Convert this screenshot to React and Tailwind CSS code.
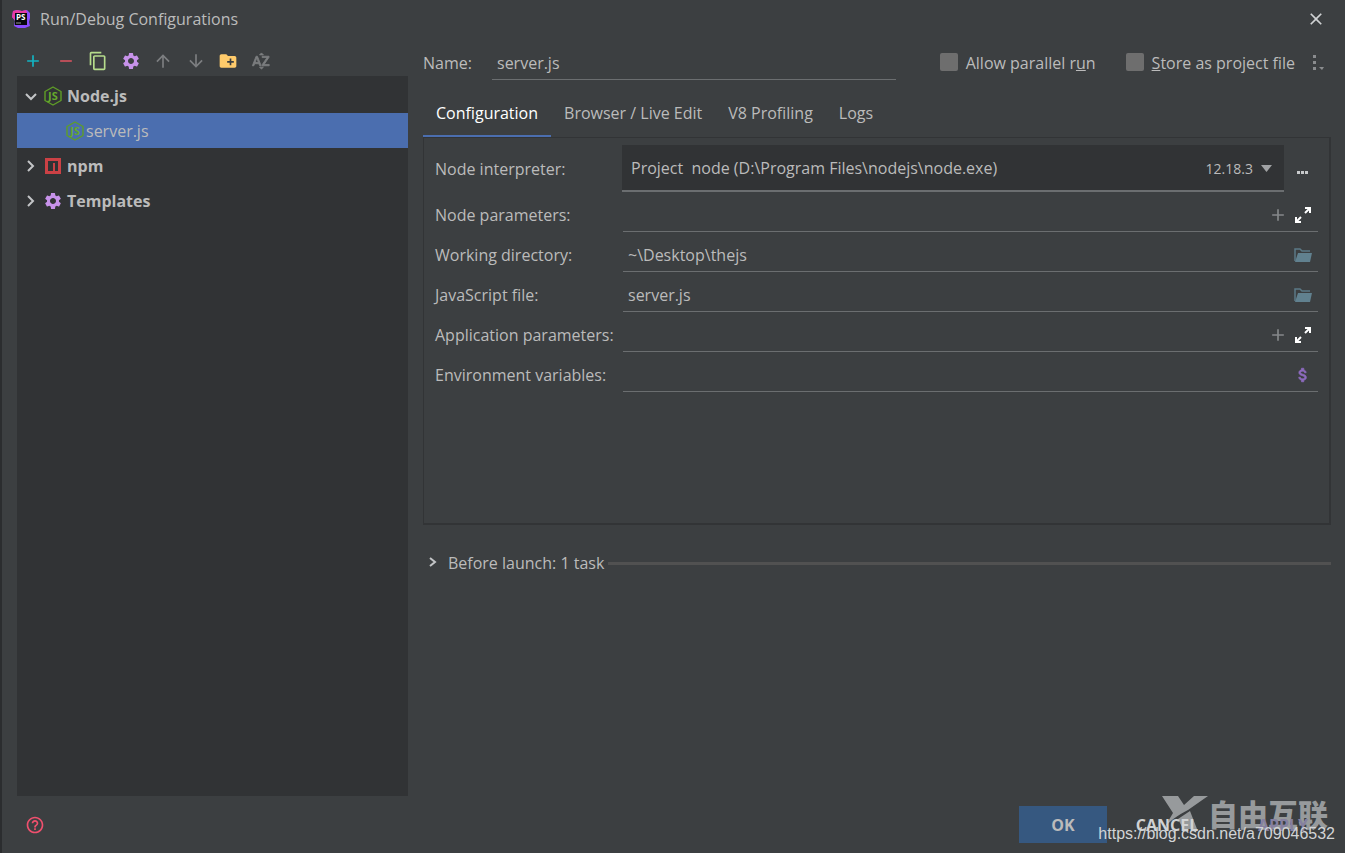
import { useState } from "react";
import {
  MdAdd,
  MdArrowDownward,
  MdArrowUpward,
  MdAttachMoney,
  MdClose,
  MdContentCopy,
  MdCreateNewFolder,
  MdHelpOutline,
  MdRemove,
  MdSettings,
  MdSortByAlpha,
} from "react-icons/md";

const TOOLS = [
  { label: "Add", icon: MdAdd, color: "text-[#12b5c4]" },
  { label: "Remove", icon: MdRemove, color: "text-[#d0525d]" },
  { label: "Copy", icon: MdContentCopy, color: "text-[#b5dc8c]" },
  { label: "Edit templates", icon: MdSettings, color: "text-[#c792ea]" },
  { label: "Move up", icon: MdArrowUpward, color: "text-[#7c7e80]" },
  { label: "Move down", icon: MdArrowDownward, color: "text-[#7c7e80]" },
  { label: "New folder", icon: MdCreateNewFolder, color: "text-[#ffcb6b]" },
  { label: "Sort", icon: MdSortByAlpha, color: "text-[#7c7e80] [&_path:last-child]:stroke-1" },
];

const TABS = ["Configuration", "Browser / Live Edit", "V8 Profiling", "Logs"];

const FIELDS = [
  { id: "node-params", label: "Node parameters:", value: "", kind: "expand" },
  { id: "work-dir", label: "Working directory:", value: "~\\Desktop\\thejs", kind: "folder" },
  { id: "js-file", label: "JavaScript file:", value: "server.js", kind: "folder" },
  { id: "app-params", label: "Application parameters:", value: "", kind: "expand" },
  { id: "env-vars", label: "Environment variables:", value: "", kind: "env" },
];

function AppLogo() {
  return (
    <svg width="20" height="20" viewBox="0 0 20 20" aria-hidden="true">
      <path d="M2 2l4-1 5 1 5-1 3 3v5l-1 4 1 4-5 2H7l-4-2 1-5-3-4z" fill="#8a4dff" />
      <path d="M2 2l4-1 5 1 4-1 1 3-8 1-4 6-3-3z" fill="#e83aa5" />
      <path d="M4 4h12v12H4z" fill="#08080c" />
      <text x="5" y="11" fontSize="8" fontWeight="700" fill="#fff" fontFamily="Open Sans, sans-serif">PS</text>
      <path d="M5 14h5" stroke="#999" strokeWidth="1" />
    </svg>
  );
}

function NodeIcon() {
  return (
    <svg width="20" height="20" viewBox="0 0 20 20" className="shrink-0" aria-hidden="true">
      <path d="M10 1l8 4.500v9L10 19l-8-4.500v-9z" fill="none" stroke="#5f9e27" strokeWidth="1.400" strokeLinejoin="round" />
      <text x="5" y="14" fontSize="11" fontWeight="700" fill="#65a82b" fontFamily="Open Sans, sans-serif">JS</text>
    </svg>
  );
}

function NpmIcon() {
  return (
    <svg width="18" height="18" viewBox="0 0 18 18" className="shrink-0" aria-hidden="true">
      <path d="M1 1h16v16H1z M4 4v10h5V6h2v8h3V4z" fill="#cb4145" fillRule="evenodd" />
    </svg>
  );
}

function Chevron({ open }) {
  return (
    <svg width="12" height="12" viewBox="0 0 12 12" className="shrink-0" aria-hidden="true">
      <path d={open ? "M1 4l5 5 5-5" : "M3 1l5 5-5 5"} fill="none" stroke="#c3c5c7" strokeWidth="2" />
    </svg>
  );
}

function SmallChevron() {
  return (
    <svg width="12" height="12" viewBox="0 0 12 12" className="mb-0.5 shrink-0" aria-hidden="true">
      <path d="M3 2l5 4-5 4" fill="none" stroke="#c3c5c7" strokeWidth="2" />
    </svg>
  );
}

function ExpandIcon() {
  return (
    <svg width="18" height="18" viewBox="0 0 18 18" aria-hidden="true">
      <path d="M11 2h5v5M15 3l-4 4M7 16H2v-5M3 15l4-4" fill="none" stroke="#fff" strokeWidth="2" />
    </svg>
  );
}

function FolderIcon() {
  return (
    <svg width="18" height="16" viewBox="0 0 18 16" aria-hidden="true">
      <path d="M1 14V2h5l2 2h8" fill="none" stroke="#5b7a87" strokeWidth="1.500" />
      <path d="M4 6h14l-2 9H1z" fill="#61818f" />
    </svg>
  );
}

function TreeItem({ label, icon, open }) {
  return (
    <button className="flex h-[35px] w-full items-center pl-2 text-left font-bold">
      <Chevron open={open} />
      <span className="ml-1.5 mr-1 flex w-5 justify-center">{icon}</span>
      {label}
    </button>
  );
}

function FieldRow({ field }) {
  const [value, setValue] = useState(field.value);

  return (
    <div className="flex h-10 items-stretch">
      <label htmlFor={field.id} className="flex w-[188px] shrink-0 items-center pt-1.5">
        {field.label}
      </label>
      <div className="flex min-w-0 flex-1 items-center border-b border-[#6b6e70] pr-1.5 pt-1.5">
        <input
          id={field.id}
          value={value}
          onChange={(e) => setValue(e.target.value)}
          className="min-w-0 flex-1 bg-transparent px-[5px] outline-none"
        />
        {field.kind === "expand" && (
          <>
            <button aria-label="Insert macro" className="mr-1.5 text-[#85888a]">
              <MdAdd size={20} />
            </button>
            <button aria-label="Expand"><ExpandIcon /></button>
          </>
        )}
        {field.kind === "folder" && <button aria-label="Browse"><FolderIcon /></button>}
        {field.kind === "env" && (
          <button aria-label="Edit variables" className="text-[#8e6bbf] [&_path:last-child]:stroke-1">
            <MdAttachMoney size={18} />
          </button>
        )}
      </div>
    </div>
  );
}

function CheckOption({ children }) {
  return (
    <label className="flex items-center gap-2 whitespace-nowrap">
      <input type="checkbox" className="mb-0.5 size-[18px] appearance-none rounded-xs bg-[#6e6e6e] checked:bg-[#4b6eaf]" />
      <span>{children}</span>
    </label>
  );
}

function Brand() {
  return (
    <div className="pointer-events-none absolute bottom-[22px] right-[17px] flex items-center whitespace-nowrap text-[#979a9c]">
      <svg width="48" height="36" viewBox="0 0 48 36" aria-hidden="true">
        <path d="M2 1h16l6 9L34 1h14L28 15C18 20 9 26 3 35l10-17z" fill="currentColor" />
        <path d="M30 16l7 18H23l-5-10c4-3 8-5 12-8z" fill="currentColor" />
        <path d="M4 35c6-9 14-13 26-20" fill="none" stroke="#3c3f41" strokeWidth="1" />
      </svg>
      <span className="font-['Noto_Sans_CJK_SC',sans-serif] text-[30px] font-black leading-9">自由互联</span>
    </div>
  );
}

export default function App() {
  const [tab, setTab] = useState(TABS[0]);
  const [name, setName] = useState("server.js");

  return (
    <div className="relative flex min-h-screen flex-col border-l-2 border-[#2b2d2f] bg-[#3c3f41] font-['Open_Sans',sans-serif] text-base leading-6 text-[#bbbbbb]">
      <header className="flex h-[38px] items-center pl-[9px] pr-[19px]">
        <AppLogo />
        <h1 className="ml-[9px] flex-1">Run/Debug Configurations</h1>
        <button aria-label="Close" className="text-[#d0d2d4]">
          <MdClose size={20} />
        </button>
      </header>

      <main className="flex flex-1 pl-[15px] pr-3.5">
        <aside className="flex w-[391px] shrink-0 flex-col">
          <div className="flex h-[38px] w-[260px] pt-2">
            {TOOLS.map(({ label, icon: Icon, color }) => (
              <button key={label} aria-label={label} className={`flex flex-1 items-center justify-center ${color}`}>
                <Icon size={20} />
              </button>
            ))}
          </div>
          <nav className="flex-1 bg-[#313335] pt-0.5">
            <TreeItem label="Node.js" icon={<NodeIcon />} open />
            <button className="flex h-[35px] w-full items-center bg-[#4b6eaf] pl-12 text-left">
              <NodeIcon />
              <span className="ml-px">server.js</span>
            </button>
            <TreeItem label="npm" icon={<NpmIcon />} />
            <TreeItem label="Templates" icon={<MdSettings size={20} className="text-[#c792ea]" />} />
          </nav>
        </aside>

        <section className="ml-[15px] flex min-w-0 flex-1 flex-col">
          <div className="flex h-[52px] items-start pt-px">
            <label htmlFor="config-name" className="w-[69px] pt-3">Name:</label>
            <input
              id="config-name"
              value={name}
              onChange={(e) => setName(e.target.value)}
              className="h-[41px] w-[404px] border-b border-[#6b6e70] bg-transparent px-[5px] pt-2 outline-none"
            />
            <div className="ml-auto flex items-center gap-[30px] pt-3">
              <CheckOption>Allow parallel r<u>u</u>n</CheckOption>
              <CheckOption><u>S</u>tore as project file</CheckOption>
            </div>
            <button aria-label="More options" className="ml-[17px] mr-[5px] mt-4 text-[#8a8c8e]">
              <svg width="14" height="16" viewBox="0 0 14 16" fill="currentColor">
                <path d="M1 0h3v3H1zM1 6h3v3H1zM1 12h3v3H1zM7 12h5l-2 3z" />
              </svg>
            </button>
          </div>

          <div className="flex h-[47px]" role="tablist">
            {TABS.map((t) => (
              <button
                key={t}
                role="tab"
                aria-selected={t === tab}
                onClick={() => setTab(t)}
                className={`border-b-2 px-[13px] ${t === tab ? "border-[#4b6eaf] text-white" : "border-transparent"}`}
              >
                {t}
              </button>
            ))}
          </div>

          <div className="flex h-[388px] flex-col border border-b-2 border-r-2 border-[#323436] px-[11px] pt-[7px]">
            <div className="flex h-[47px]">
              <label htmlFor="interpreter" className="flex w-[187px] shrink-0 items-center">Node interpreter:</label>
              <div className="relative min-w-0 flex-1">
                <select
                  id="interpreter"
                  className="size-full appearance-none border-b-2 border-[#6b6e70] bg-[#313335] pl-[9px] pr-24 outline-none"
                >
                  <option>{"Project\u00a0 node (D:\\Program Files\\nodejs\\node.exe)"}</option>
                </select>
                <span className="pointer-events-none absolute inset-y-0 right-3 flex items-center gap-2 text-sm">
                  12.18.3
                  <svg width="11" height="7" viewBox="0 0 11 7" aria-hidden="true">
                    <path d="M0 0h11L5.500 7z" fill="#a0a2a4" />
                  </svg>
                </span>
              </div>
              <button aria-label="Browse interpreters" className="flex w-[34px] items-center justify-center pl-0.5 pt-2">
                <svg width="11" height="3" viewBox="0 0 11 3" fill="#c8cacc">
                  <path d="M0 0h3v3H0zM4 0h3v3H4zM8 0h3v3H8z" />
                </svg>
              </button>
            </div>
            {FIELDS.map((f) => (
              <FieldRow key={f.id} field={f} />
            ))}
          </div>

          <button className="mt-[26px] flex items-center pl-1 text-left">
            <SmallChevron />
            <span className="ml-[9px]">Before launch: 1 task</span>
            <span className="ml-1 h-[3px] flex-1 bg-[#515151]" />
          </button>
        </section>
      </main>

      <Brand />

      <footer className="relative flex h-[57px] items-center pl-[23px] pr-3.5 font-bold">
        <button aria-label="Help" className="text-[#f0506e]">
          <MdHelpOutline size={20} />
        </button>
        <button className="ml-auto h-[37px] w-[88px] bg-[#365880]">OK</button>
        <button className="ml-4 h-[37px] w-[88px] text-[#d0d2d4]">CANCEL</button>
        <button disabled className="ml-7 mr-1 h-[37px] w-[88px] text-[#8580a0]">APPLY</button>
      </footer>

      <span className="pointer-events-none absolute bottom-[7px] right-2.5 font-['Liberation_Sans',sans-serif] text-base leading-6 text-[#d2d4d6]">
        https://blog.csdn.net/a709046532
      </span>
    </div>
  );
}
